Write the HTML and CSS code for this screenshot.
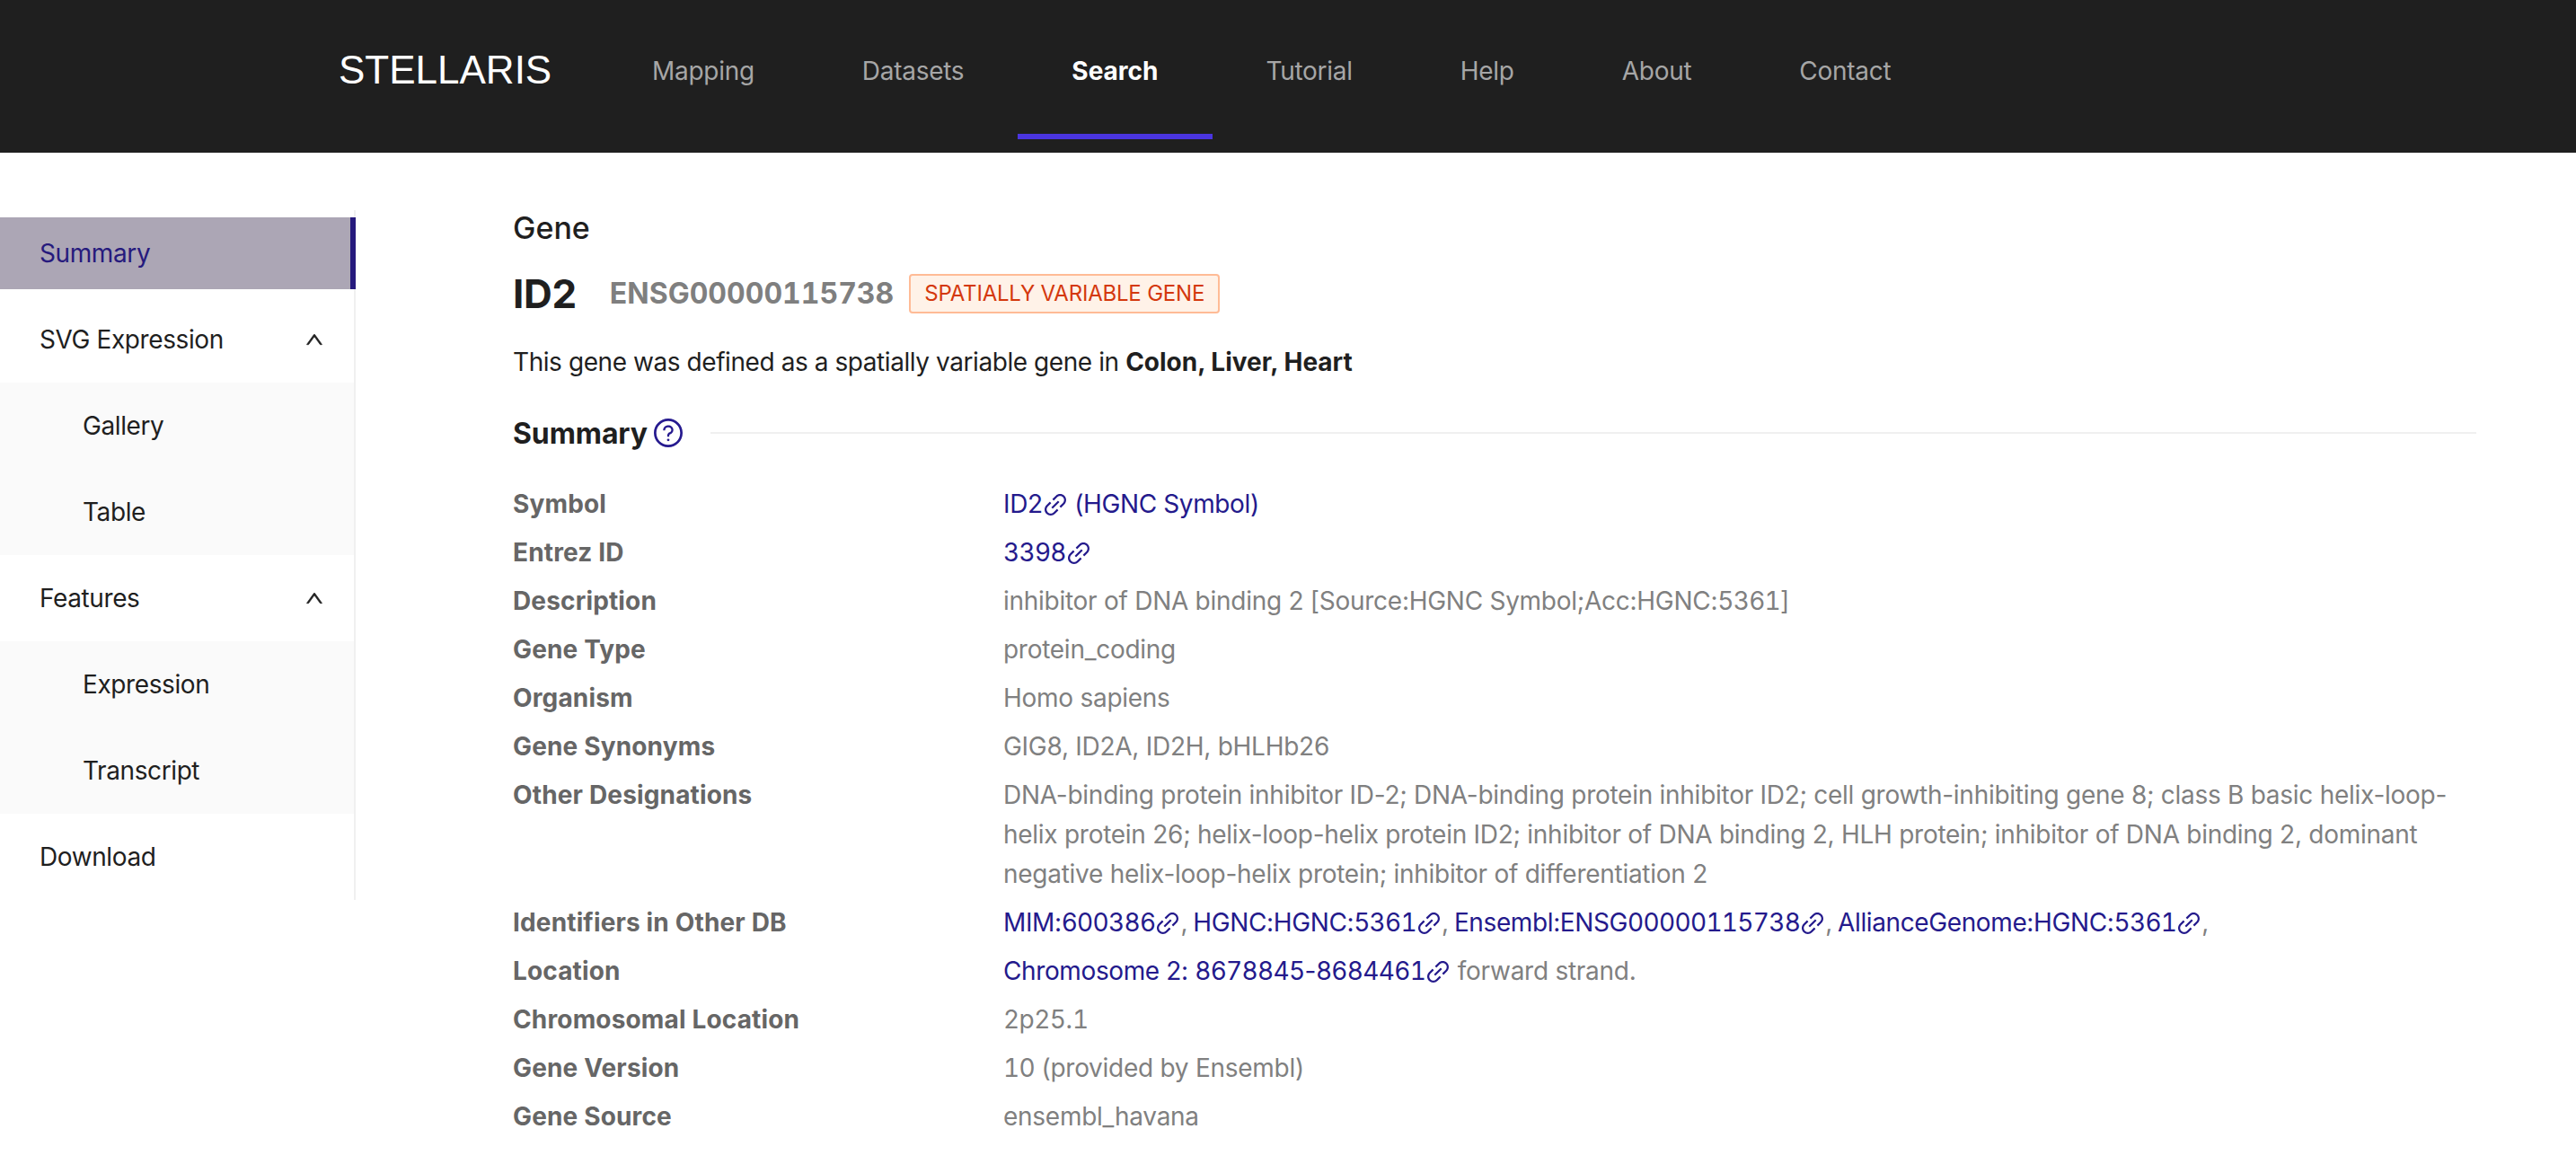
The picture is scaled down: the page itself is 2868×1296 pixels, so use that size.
FILE: index.html
```html
<!DOCTYPE html>
<html lang="en">
  <head>
    <meta charset="UTF-8" />
    <title>STELLARIS - ID2</title>
    <link rel="stylesheet" href="styles.css">
  </head>
  <body>
    <svg class="icon-defs" width="0" height="0">
      <symbol id="icon-link" viewBox="64 64 896 896">
        <path d="M574 665.4a8.03 8.03 0 00-11.3 0L446.5 781.6c-53.8 53.8-144.6 59.5-204 0-59.5-59.5-53.8-150.2 0-204l116.2-116.2c3.1-3.1 3.1-8.2 0-11.3l-39.8-39.8a8.03 8.03 0 00-11.3 0L191.4 526.5c-84.6 84.6-84.6 221.5 0 306s221.5 84.6 306 0l116.2-116.2c3.1-3.1 3.1-8.2 0-11.3L574 665.4zm258.6-474c-84.6-84.6-221.5-84.6-306 0L410.3 307.6a8.03 8.03 0 000 11.3l39.7 39.7c3.1 3.1 8.2 3.1 11.3 0l116.2-116.2c53.8-53.8 144.6-59.5 204 0 59.5 59.5 53.8 150.2 0 204L665.3 562.6a8.03 8.03 0 000 11.3l39.8 39.8c3.1 3.1 8.2 3.1 11.3 0l116.2-116.2c84.5-84.6 84.5-221.5 0-306.1zM610.1 372.3a8.03 8.03 0 00-11.3 0L372.3 598.7a8.03 8.03 0 000 11.3l39.6 39.6c3.1 3.1 8.2 3.1 11.3 0l226.4-226.4c3.1-3.1 3.1-8.2 0-11.3l-39.5-39.6z" />
      </symbol>
      <symbol id="icon-up" viewBox="64 64 896 896">
        <path d="M890.5 755.3L537.9 269.2c-12.8-17.6-39-17.6-51.7 0L133.5 755.3A8 8 0 00140 768h75c5.1 0 9.9-2.5 12.9-6.6L512 369.8l284.1 391.6c3 4.1 7.8 6.6 12.9 6.6h75c6.5 0 10.3-7.4 6.5-12.7z" />
      </symbol>
    </svg>

    <header class="topbar">
      <div class="logo">STELLARIS</div>
      <nav class="topnav">
        <a class="topnav-item" href="#">Mapping</a>
        <a class="topnav-item" href="#">Datasets</a>
        <a class="topnav-item active" href="#">Search</a>
        <a class="topnav-item" href="#">Tutorial</a>
        <a class="topnav-item" href="#">Help</a>
        <a class="topnav-item" href="#">About</a>
        <a class="topnav-item" href="#">Contact</a>
      </nav>
    </header>

    <div class="page">
      <aside class="sidebar">
        <a class="side-item selected" href="#">Summary</a>
        <a class="side-item" href="#">SVG Expression <svg class="arrow"><use href="#icon-up" /></svg></a>
        <div class="side-sub">
          <a class="side-item" href="#">Gallery</a>
          <a class="side-item" href="#">Table</a>
        </div>
        <a class="side-item" href="#">Features <svg class="arrow"><use href="#icon-up" /></svg></a>
        <div class="side-sub">
          <a class="side-item" href="#">Expression</a>
          <a class="side-item" href="#">Transcript</a>
        </div>
        <a class="side-item" href="#">Download</a>
      </aside>

      <main class="content">
        <div class="kicker">Gene</div>
        <div class="gene-title">
          <span class="gene-name">ID2</span>
          <span class="gene-id">ENSG00000115738</span>
          <span class="tag">SPATIALLY VARIABLE GENE</span>
        </div>
        <p class="gene-note">This gene was defined as a spatially variable gene in <b>Colon, Liver, Heart</b></p>

        <div class="section-head">
          <h2>Summary</h2>
          <svg class="help" viewBox="64 64 896 896">
            <path d="M512 64C264.6 64 64 264.6 64 512s200.6 448 448 448 448-200.6 448-448S759.4 64 512 64zm0 820c-205.4 0-372-166.6-372-372s166.6-372 372-372 372 166.6 372 372-166.6 372-372 372z" />
            <path d="M623.6 316.7C593.6 290.4 554 276 512 276s-81.6 14.5-111.6 40.7C369.2 344 352 380.7 352 420v7.6c0 4.4 3.6 8 8 8h48c4.4 0 8-3.6 8-8V420c0-44.1 43.1-80 96-80s96 35.9 96 80c0 31.1-22 59.6-56.1 72.7-21.2 8.1-39.2 22.3-52.1 40.9-13.1 19-19.9 41.8-19.9 64.9V620c0 4.4 3.6 8 8 8h48c4.4 0 8-3.6 8-8v-22.7a48.3 48.3 0 0130.9-44.8c59-22.7 97.1-74.7 97.1-132.5.1-39.3-17.1-76-48.3-103.3zM472 732a40 40 0 1080 0 40 40 0 10-80 0z" />
          </svg>
          <div class="section-line"></div>
        </div>

        <div class="info">
          <div class="info-label">Symbol</div>
          <div class="info-value"><a href="#">ID2<svg class="link-icon"><use href="#icon-link" /></svg> (HGNC Symbol)</a></div>

          <div class="info-label">Entrez ID</div>
          <div class="info-value"><a href="#"><span class="num">3398</span><svg class="link-icon"><use href="#icon-link" /></svg></a></div>

          <div class="info-label">Description</div>
          <div class="info-value">inhibitor of DNA binding 2 [Source:HGNC Symbol;Acc:HGNC:<span class="num">5361</span>]</div>

          <div class="info-label">Gene Type</div>
          <div class="info-value">protein_coding</div>

          <div class="info-label">Organism</div>
          <div class="info-value">Homo sapiens</div>

          <div class="info-label">Gene Synonyms</div>
          <div class="info-value">GIG8, ID2A, ID2H, bHLHb26</div>

          <div class="info-label">Other Designations</div>
          <div class="info-value">DNA-binding protein inhibitor ID-2; DNA-binding protein inhibitor ID2; cell growth-inhibiting gene 8; class B basic helix-loop-helix protein 26; helix-loop-helix protein ID2; inhibitor of DNA binding 2, HLH protein; inhibitor of DNA binding 2, dominant negative helix-loop-helix protein; inhibitor of differentiation 2</div>

          <div class="info-label">Identifiers in Other DB</div>
          <div class="info-value info-ids">
            <a href="#">MIM:<span class="num">600386</span><svg class="link-icon"><use href="#icon-link" /></svg></a>,
            <a href="#">HGNC:HGNC:<span class="num">5361</span><svg class="link-icon"><use href="#icon-link" /></svg></a>,
            <a href="#">Ensembl:ENSG<span class="num">00000115738</span><svg class="link-icon"><use href="#icon-link" /></svg></a>,
            <a href="#">AllianceGenome:HGNC:<span class="num">5361</span><svg class="link-icon"><use href="#icon-link" /></svg></a>,
          </div>

          <div class="info-label">Location</div>
          <div class="info-value"><a href="#">Chromosome 2: <span class="num">8678845</span>-<span class="num">8684461</span><svg class="link-icon"><use href="#icon-link" /></svg></a> forward strand.</div>

          <div class="info-label">Chromosomal Location</div>
          <div class="info-value"><span class="num">2</span>p<span class="num">25</span>.<span class="num">1</span></div>

          <div class="info-label">Gene Version</div>
          <div class="info-value"><span class="num">10</span> (provided by Ensembl)</div>

          <div class="info-label">Gene Source</div>
          <div class="info-value">ensembl_havana</div>
        </div>
      </main>
    </div>
  </body>
</html>
```

FILE: styles.css
```css
/* Basic styles */
html,
body {
  height: 100%;
}

body {
  margin: 0;
  background-color: #ffffff;
  color: #1f1f1f;
  font-family: "Inter", "Liberation Sans", sans-serif;
  font-size: 28px;
  letter-spacing: -0.33px;
  line-height: 44px;
  overflow: hidden;
}

a {
  color: inherit;
  text-decoration: none;
}

b {
  letter-spacing: 0;
}

.num {
  font-variant-numeric: tabular-nums;
  letter-spacing: -0.7px;
}

.icon-defs {
  position: absolute;
}

/* Top bar */
.topbar {
  display: flex;
  height: 170px;
  padding-left: 377px;
  background-color: #1f1f1f;
}

.logo {
  width: 236px;
  margin-top: 56px;
  color: #ffffff;
  font-family: "Liberation Sans", Arial, sans-serif;
  font-size: 44px;
  letter-spacing: 0;
  line-height: 44px;
}

.topnav {
  display: flex;
  margin-left: 53px;
}

.topnav-item {
  height: 149px;
  padding: 57px 60px 0;
  box-sizing: border-box;
  color: #a6a6a6;
  letter-spacing: -0.28px;
}

.topnav-item.active {
  height: 155px;
  border-bottom: 6px solid #4a35e0;
  color: #ffffff;
  font-weight: 700;
  letter-spacing: 0;
}

/* Side menu */
.page {
  display: flex;
  align-items: flex-start;
  margin-top: 64px;
}

.sidebar {
  display: flex;
  flex: none;
  flex-direction: column;
  width: 394px;
  border-right: 2px solid #f0f0f0;
  letter-spacing: -0.4px;
}

.side-item {
  display: flex;
  align-items: center;
  justify-content: space-between;
  height: 80px;
  margin: 8px 0;
  padding: 0 34px 0 44px;
}

.side-item.selected {
  margin-right: -2px;
  padding-right: 30px;
  border-right: 6px solid #261a7d;
  background-color: #aca6b5;
  color: #261a7d;
}

.side-sub {
  display: flex;
  flex-direction: column;
  padding: 8px 0;
  background-color: #fafafa;
}

.side-sub .side-item {
  margin: 0;
  padding-left: 92px;
}

.side-sub .side-item + .side-item {
  margin-top: 16px;
}

.arrow {
  width: 20px;
  height: 20px;
  fill: #1f1f1f;
  stroke: #1f1f1f;
  stroke-width: 30;
}

/* Gene content */
.content {
  flex: 1;
  margin: -2px 111px 0 175px;
}

.gene-title {
  display: flex;
  align-items: center;
  margin-top: 29px;
}

.kicker {
  font-size: 34px;
  font-weight: 500;
  letter-spacing: 0;
}

.gene-name {
  margin-right: 37px;
  font-size: 44px;
  font-weight: 700;
}

.gene-id {
  margin-right: 17px;
  color: #7f7f7f;
  font-size: 32px;
  font-variant-numeric: tabular-nums;
  font-weight: 700;
  letter-spacing: 0;
}

.tag {
  padding: 0 15px;
  border: 2px solid #ffbb96;
  border-radius: 4px;
  background-color: #fff2e8;
  color: #d4380d;
  font-size: 24px;
  letter-spacing: -0.2px;
  line-height: 40px;
}

.gene-note {
  margin: 32px 0 0;
  letter-spacing: -0.43px;
}

.gene-note b {
  letter-spacing: 0;
}

.section-head {
  display: flex;
  align-items: center;
  margin-top: 35px;
}

.section-head h2 {
  margin: 0;
  padding-top: 2px;
  font-size: 32px;
  font-weight: 700;
  letter-spacing: -0.1px;
  line-height: 42px;
}

.help {
  width: 32px;
  height: 32px;
  margin-left: 7px;
  fill: #261a8f;
}

.section-line {
  flex: 1;
  height: 2px;
  margin-left: 31px;
  background-color: #f0f0f0;
}

.info {
  display: grid;
  grid-template-columns: 546px 1fr;
  row-gap: 10px;
  margin-top: 35px;
}

.info-label {
  color: #666666;
  font-weight: 700;
  letter-spacing: 0.15px;
}

.info-value {
  color: #808080;
  letter-spacing: -0.27px;
}

.info-value a {
  color: #241a8c;
  letter-spacing: -0.38px;
}

.info-ids {
  word-spacing: -1.5px;
}

.link-icon {
  width: 28px;
  height: 28px;
  vertical-align: -5px;
  fill: #241a8c;
}
```
